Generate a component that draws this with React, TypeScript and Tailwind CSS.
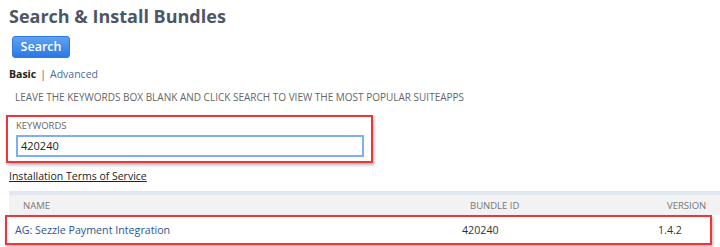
import { useState } from "react";

export default function App() {
    const [keywords, setKeywords] = useState("420240");

    return (
        <div className="w-[720px] h-[247px] bg-white overflow-hidden font-['Open_Sans',sans-serif] text-[#333]">
            <h1 className="pl-[9px] pt-[3px] text-[18px] leading-[26px] font-bold text-[#4d5666]">
                Search &amp; Install Bundles
            </h1>

            <div className="pl-[12px] pt-[4px]">
                <button className="h-[22px] w-[58px] rounded-[3px] border border-[#2f7ad9] bg-gradient-to-b from-[#5ea2f2] to-[#2a78e2] text-white text-[12.5px] font-semibold leading-[20px]">
                    Search
                </button>
            </div>

            <div className="pl-[9px] pt-[8px] text-[10.5px] leading-[16px]">
                <span className="font-bold text-[#222]">Basic</span>
                <span className="mx-[4px] text-[#9c4b5b]">|</span>
                <span className="text-[#4d6a9a]">Advanced</span>
            </div>

            <p className="pl-[15px] pt-[8px] text-[10px] leading-[14px] uppercase text-[#666]">
                Leave the keywords box blank and click search to view the most popular suiteapps
            </p>

            <div className="ml-[6px] mt-[11px] w-[367px] h-[48px] border-2 border-[#e8383d] shadow-[1px_2px_3px_rgba(0,0,0,0.3)] pl-[8px] pt-[3px]">
                <div className="text-[9.5px] leading-[12px] uppercase text-[#666]">Keywords</div>
                <input
                    className="mt-[1px] w-[348px] h-[22px] border-2 border-[#7eaff0] px-[3px] text-[11px] text-[#222] outline-none"
                    value={keywords}
                    onChange={(e) => setKeywords(e.target.value)}
                />
            </div>

            <div className="pl-[9px] pt-[5px] text-[10.5px] leading-[16px] underline text-[#222]">
                Installation Terms of Service
            </div>

            <div className="ml-[9px] mt-[7px] h-[4px] bg-[#e1e7ef]" />
            <div className="ml-[9px] h-[20px] bg-[#f2f2f2] flex items-end pb-[2px] text-[9.5px] uppercase text-[#777]">
                <div className="pl-[14px] w-[461px]">Name</div>
                <div className="w-[197px]">Bundle ID</div>
                <div className="flex-1">Version</div>
            </div>

            <div className="ml-[5px] w-[707px] h-[30px] border-2 border-[#e8383d] shadow-[1px_2px_3px_rgba(0,0,0,0.3)] flex items-center text-[10.7px]">
                <div className="pl-[8px] w-[455px] text-[#2f5496]">AG: Sezzle Payment Integration</div>
                <div className="w-[196px] text-[#333]">420240</div>
                <div className="flex-1 text-[#333]">1.4.2</div>
            </div>
        </div>
    );
}
